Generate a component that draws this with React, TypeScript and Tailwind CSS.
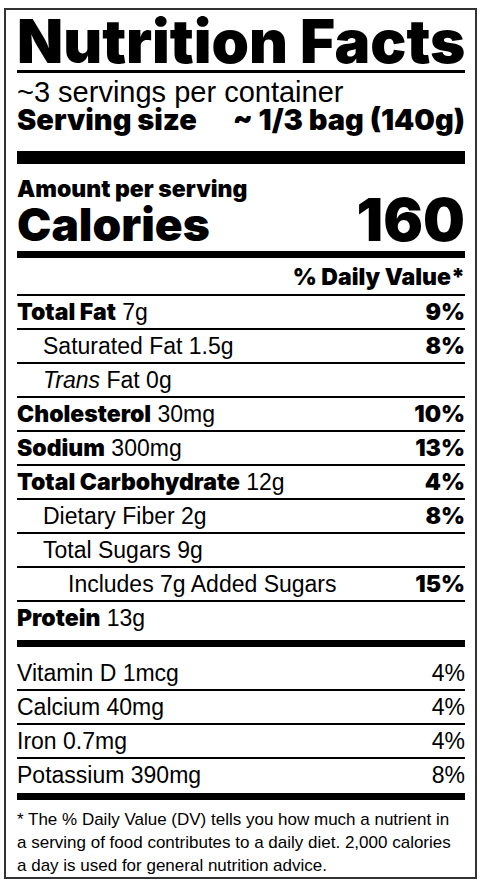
const heavy = "font-['Inter',sans-serif] font-black";

type Item = {
  name: string;
  amount: string;
  dv?: string;
  bold?: boolean;
  italic?: boolean;
  indent?: 0 | 1 | 2;
};

const nutrients: Item[] = [
  { name: 'Total Fat', amount: '7g', dv: '9%', bold: true },
  { name: 'Saturated Fat', amount: '1.5g', dv: '8%', indent: 1 },
  { name: 'Trans', amount: 'Fat 0g', italic: true, indent: 1 },
  { name: 'Cholesterol', amount: '30mg', dv: '10%', bold: true },
  { name: 'Sodium', amount: '300mg', dv: '13%', bold: true },
  { name: 'Total Carbohydrate', amount: '12g', dv: '4%', bold: true },
  { name: 'Dietary Fiber', amount: '2g', dv: '8%', indent: 1 },
  { name: 'Total Sugars', amount: '9g', indent: 1 },
  { name: 'Includes 7g Added Sugars', amount: '', dv: '15%', indent: 2 },
];

const vitamins = [
  { name: 'Vitamin D 1mcg', dv: '4%' },
  { name: 'Calcium 40mg', dv: '4%' },
  { name: 'Iron 0.7mg', dv: '4%' },
  { name: 'Potassium 390mg', dv: '8%' },
];

function NutrientRow({ item }: { item: Item }) {
  const pad = item.indent === 2 ? 'pl-[51px]' : item.indent === 1 ? 'pl-[26px]' : '';
  return (
    <div className={`flex h-[34px] items-center justify-between border-t-2 border-black text-[23px] leading-[32px] ${pad}`}>
      <span className="whitespace-nowrap">
        {item.bold ? <span className={heavy}>{item.name}</span> : item.italic ? <i>{item.name}</i> : item.name}
        {item.amount ? ' ' + item.amount : ''}
      </span>
      {item.dv && <span className={heavy}>{item.dv}</span>}
    </div>
  );
}

export default function App() {
  return (
    <div className="ml-1 mt-2 w-[473px] border-2 border-[#333] bg-white pl-[11px] pr-[10px] pt-[2px] font-['Liberation_Sans',Arial,sans-serif] text-black">
      <h1 className={`${heavy} whitespace-nowrap text-[60px] leading-[58px]`}>Nutrition Facts</h1>
      <div className="h-[3px] bg-black" />

      <div className="mt-[5px] whitespace-nowrap text-[29px] leading-[28px]">~3 servings per container</div>
      <div className={`flex justify-between whitespace-nowrap text-[29px] leading-[28px] ${heavy}`}>
        <span>Serving size</span>
        <span>~ 1/3 bag (140g)</span>
      </div>
      <div className="mt-[17px] h-[13px] bg-black" />

      <div className={`mt-[15px] text-[23px] leading-[21px] ${heavy}`}>Amount per serving</div>
      <div className={`flex items-baseline justify-between ${heavy}`}>
        <span className="text-[46px] leading-[40px]">Calories</span>
        <span className="text-[59px] leading-[40px]">160</span>
      </div>
      <div className="mt-[7px] h-[7px] bg-black" />

      <div className={`h-[36px] pt-[9px] text-right text-[23px] leading-[20px] ${heavy}`}>% Daily Value*</div>

      {nutrients.map((n) => (
        <NutrientRow key={n.name} item={n} />
      ))}
      <div className="h-[40px] border-t-2 border-black text-[23px] leading-[32px]">
        <span className={heavy}>Protein</span> 13g
      </div>
      <div className="h-[7px] bg-black" />

      <div className="pt-[10px] text-[23px] leading-[32px]">
        {vitamins.map((v, i) => (
          <div
            key={v.name}
            className={`flex justify-between ${i === 0 ? 'h-[32px]' : 'h-[34px] border-t-2 border-black'}`}
          >
            <span>{v.name}</span>
            <span>{v.dv}</span>
          </div>
        ))}
      </div>
      <div className="mt-[2px] h-[7px] bg-black" />

      <p className="whitespace-nowrap pt-[8px] text-[17px] leading-[23px]">
        * The % Daily Value (DV) tells you how much a nutrient in
        <br />
        a serving of food contributes to a daily diet. 2,000 calories
        <br />
        a day is used for general nutrition advice.
      </p>
    </div>
  );
}
